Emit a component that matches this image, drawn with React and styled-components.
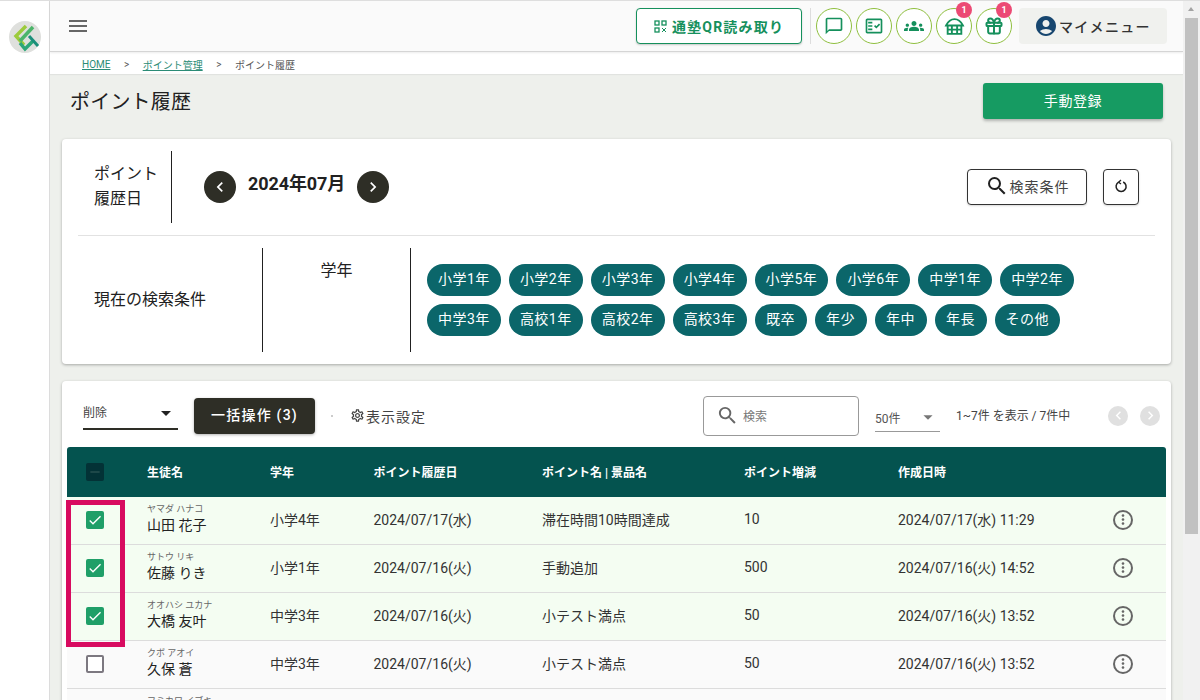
import React from "react";
import styled, { createGlobalStyle } from "styled-components";
import {
  MdMenu,
  MdChatBubbleOutline,
  MdOutlineFactCheck,
  MdGroups,
  MdAccountCircle,
  MdSearch,
  MdChevronLeft,
  MdChevronRight,
  MdArrowDropDown,
  MdOutlineSettings,
  MdCheck,
  MdRemove,
  MdMoreVert,
} from "react-icons/md";
import { LuGift } from "react-icons/lu";

const FONT = `Roboto, "Noto Sans CJK JP", sans-serif`;
const COLS = "80px 123px 103.5px 168.5px 202px 154px 200px 1fr";

const GRADES = [
  ["小学1年", "小学2年", "小学3年", "小学4年", "小学5年", "小学6年", "中学1年", "中学2年"],
  ["中学3年", "高校1年", "高校2年", "高校3年", "既卒", "年少", "年中", "年長", "その他"],
];

const ROWS = [
  { kana: "ヤマダ ハナコ", name: "山田 花子", grade: "小学4年", date: "2024/07/17(水)", item: "滞在時間10時間達成", pt: "10", at: "2024/07/17(水) 11:29", on: true },
  { kana: "サトウ リキ", name: "佐藤 りき", grade: "小学1年", date: "2024/07/16(火)", item: "手動追加", pt: "500", at: "2024/07/16(火) 14:52", on: true },
  { kana: "オオハシ ユカナ", name: "大橋 友叶", grade: "中学3年", date: "2024/07/16(火)", item: "小テスト満点", pt: "50", at: "2024/07/16(火) 13:52", on: true },
  { kana: "クボ アオイ", name: "久保 蒼", grade: "中学3年", date: "2024/07/16(火)", item: "小テスト満点", pt: "50", at: "2024/07/16(火) 13:52", on: false },
  { kana: "フミカワ イブキ", name: "文川 伊吹", grade: "中学3年", date: "2024/07/16(火)", item: "小テスト満点", pt: "50", at: "2024/07/16(火) 13:52", on: false },
];

const Global = createGlobalStyle`
  html, body { margin: 0; height: 100%; overflow: hidden; }
  body { font-family: ${FONT}; color: #212121; background: #fff; }
  * { box-sizing: border-box; }
`;

const Shell = styled.div`
  display: flex;
  height: 700px;
  overflow: hidden;
  border-top: 1px solid #dedede;
`;

const Side = styled.aside`
  flex: 0 0 50px;
  padding: 20px 0 0 9px;
  background: #fff;
  border-right: 1px solid #dcdcdc;
`;

const Main = styled.div`
  flex: 1;
  min-width: 0;
  background: #eef0ec;
`;

const Header = styled.header`
  display: flex;
  align-items: center;
  height: 51px;
  padding: 0 16px 0 16px;
  background: #fafafa;
  border-bottom: 1px solid #d5d5d5;
  box-shadow: 0 1px 2px rgba(0, 0, 0, 0.08);
  position: relative;
  svg { display: block; }
`;

const MenuBtn = styled.div`
  color: #666;
  margin-right: auto;
  font-size: 24px;
`;

const QrBtn = styled.div`
  display: flex;
  align-items: center;
  justify-content: center;
  gap: 5px;
  width: 166px;
  height: 36px;
  color: #15905c;
  background: #fff;
  border: 1px solid #15905c;
  border-radius: 4px;
  font-size: 14px;
  font-weight: 700;
  letter-spacing: 1.2px;
  box-shadow: 0 1px 2px rgba(0, 0, 0, 0.2);
`;

const VLine = styled.div`
  width: 1px;
  height: 36px;
  margin: 0 5px 0 8px;
  background: #ddd;
`;

const Round = styled.div`
  position: relative;
  display: flex;
  align-items: center;
  justify-content: center;
  width: 36px;
  height: 36px;
  margin-right: 4px;
  color: #15905c;
  background: #fff;
  border: 1px solid #8fbf3f;
  border-radius: 50%;
  font-size: 20px;
`;

const Badge = styled.span`
  position: absolute;
  top: -7px;
  right: -1px;
  width: 16px;
  height: 16px;
  line-height: 16px;
  text-align: center;
  color: #fff;
  background: #ec4a74;
  border-radius: 50%;
  font-size: 9px;
  font-weight: 700;
`;

const MyMenu = styled.div`
  display: flex;
  align-items: center;
  gap: 1px;
  width: 148px;
  height: 36px;
  margin-left: 3px;
  padding-left: 15px;
  color: #17466f;
  background: #f0f1ee;
  border-radius: 4px;
  font-size: 14px;
  font-weight: 500;
  letter-spacing: 1.3px;
  span { color: #333; }
  svg { font-size: 24px; }
`;

const Crumbs = styled.nav`
  display: flex;
  align-items: center;
  height: 22px;
  padding: 3px 0 0 32px;
  background: #fff;
  font-size: 10px;
  color: #555;
  box-shadow: 0 1px 1px rgba(0, 0, 0, 0.05);
  i { font-style: normal; margin: 0 13.5px; }
`;

const CrumbLink = styled.a`
  color: #2b8c76;
  text-decoration: underline;
`;

const TitleRow = styled.div`
  display: flex;
  align-items: center;
  justify-content: space-between;
  height: 65px;
  padding: 0 20px 11px;
`;

const Title = styled.h1`
  margin: 2px 0 0;
  font-size: 20px;
  font-weight: 400;
  line-height: 1;
  letter-spacing: 0.2px;
`;

const PrimaryBtn = styled.div`
  width: 180px;
  height: 36px;
  line-height: 36px;
  text-align: center;
  color: #fff;
  background: #169b62;
  border-radius: 3px;
  font-size: 14px;
  letter-spacing: 0.6px;
  box-shadow: 0 2px 3px rgba(0, 0, 0, 0.25);
`;

const Card = styled.section`
  margin: 0 12px 17px;
  background: #fff;
  border-radius: 4px;
  box-shadow: 0 1px 3px rgba(0, 0, 0, 0.3);
`;

const FilterTop = styled.div`
  display: flex;
  align-items: center;
  height: 97px;
  margin: 0 16px;
  padding: 0 16px 1px 16px;
  border-bottom: 1px solid #e2e2e2;
`;

const DateLabel = styled.div`
  width: 78px;
  height: 72px;
  padding-bottom: 2px;
  display: flex;
  align-items: center;
  border-right: 1px solid #212121;
  font-size: 16px;
  line-height: 25px;
`;

const MonthNav = styled.div`
  display: flex;
  align-items: center;
  gap: 12px;
  margin-left: 32px;
  strong {
    font-size: 18px;
    font-weight: 700;
    letter-spacing: -0.1px;
    margin-top: -9px;
  }
`;

const MonthBtn = styled.div`
  display: flex;
  align-items: center;
  justify-content: center;
  width: 32px;
  height: 32px;
  color: #fff;
  background: #2e2e26;
  border-radius: 50%;
  font-size: 20px;
`;

const OutlineBtn = styled.div`
  display: flex;
  align-items: center;
  justify-content: center;
  gap: 1px;
  width: ${(p) => p.$w}px;
  height: 36px;
  padding-bottom: 1px;
  margin-left: ${(p) => p.$ml || 0};
  background: #fff;
  border: 1px solid #333;
  border-radius: 4px;
  font-size: 14px;
  color: #444;
  letter-spacing: 1px;
  box-shadow: 0 1px 2px rgba(0, 0, 0, 0.15);
  svg { color: #212121; font-size: 24px; }
`;

const FilterBottom = styled.div`
  display: flex;
  height: 128px;
  padding: 12px 0;
  margin-left: 16px;
`;

const CondLabel = styled.div`
  width: 185px;
  padding: 0 0 4px 16px;
  display: flex;
  align-items: center;
  border-right: 1px solid #212121;
  font-size: 16px;
`;

const CondName = styled.div`
  width: 148px;
  padding-top: 9px;
  text-align: center;
  border-right: 1px solid #212121;
  font-size: 16px;
`;

const ChipArea = styled.div`
  display: flex;
  flex-direction: column;
  gap: 8px;
  padding: 16px 0 0 16px;
`;

const ChipRow = styled.div`
  display: flex;
  gap: 8px;
`;

const Chip = styled.span`
  min-width: 52px;
  height: 32px;
  line-height: 30px;
  padding: 0 11px;
  text-align: center;
  color: #fff;
  background: #0b666a;
  border-radius: 16px;
  font-size: 14px;
  letter-spacing: 0.5px;
`;

const Toolbar = styled.div`
  display: flex;
  align-items: center;
  height: 66px;
  padding: 3px 0 0 21px;
`;

const BulkSelect = styled.div`
  display: flex;
  align-items: center;
  justify-content: space-between;
  width: 95px;
  height: 30px;
  margin-bottom: 2px;
  border-bottom: 2px solid #2e2e26;
  font-size: 12px;
  color: #444;
  svg { font-size: 24px; color: #222; margin-top: -2px; }
  span { margin-top: -4px; }
`;

const DarkBtn = styled.div`
  width: 121px;
  height: 36px;
  line-height: 34px;
  margin-left: 16px;
  text-align: center;
  color: #fff;
  background: #2e2e26;
  border-radius: 4px;
  font-size: 14px;
  font-weight: 500;
  letter-spacing: 1.2px;
  box-shadow: 0 1px 3px rgba(0, 0, 0, 0.3);
`;

const Dot = styled.i`
  width: 2px;
  height: 2px;
  margin-left: 16px;
  background: #bbb;
  border-radius: 50%;
`;

const Settings = styled.div`
  display: flex;
  align-items: center;
  gap: 1px;
  margin-left: 17px;
  margin-right: auto;
  font-size: 14px;
  color: #444;
  letter-spacing: 1px;
  svg { font-size: 15px; }
`;

const SearchBox = styled.div`
  display: flex;
  align-items: center;
  gap: 4px;
  width: 156px;
  height: 40px;
  padding-left: 12px;
  border: 1px solid #999;
  border-radius: 4px;
  font-size: 12px;
  color: #777;
  svg { font-size: 23px; color: #666; }
`;

const PageSelect = styled.div`
  display: flex;
  align-items: center;
  justify-content: space-between;
  width: 65px;
  height: 30px;
  padding-top: 2px;
  margin: 3px 0 0 16px;
  border-bottom: 1px solid #999;
  font-size: 12px;
  color: #555;
  svg { font-size: 22px; color: #777; margin: -2px 1px 0 0; }
`;

const PageInfo = styled.div`
  width: 152px;
  margin-left: 16px;
  font-size: 12px;
  color: #444;
  margin-top: -2px;
`;

const PageBtn = styled.div`
  display: flex;
  align-items: center;
  justify-content: center;
  width: 20px;
  height: 20px;
  margin-right: ${(p) => p.$mr}px;
  color: #fff;
  background: #e0e0e0;
  border-radius: 50%;
  font-size: 17px;
`;

const TableWrap = styled.div`
  position: relative;
  margin: 0 5px;
`;

const HeadRow = styled.div`
  display: grid;
  grid-template-columns: ${COLS};
  align-items: center;
  height: 50px;
  padding-bottom: 1px;
  color: #fff;
  background: #04534f;
  border-radius: 3px 3px 0 0;
  font-size: 12px;
  font-weight: 700;
`;

const Row = styled.div`
  display: grid;
  grid-template-columns: ${COLS};
  align-items: center;
  height: 48px;
  padding-bottom: 2px;
  background: ${(p) => (p.$on ? "#f4fdf2" : "#fafafa")};
  border-bottom: 1px solid #dcdcdc;
  font-size: 14px;
  color: #333;
`;

const Cell = styled.div`
  padding-bottom: 2px;
`;

const CheckCell = styled.div`
  display: flex;
  justify-content: center;
  padding-right: 24px;
`;

const Check = styled.span`
  display: flex;
  align-items: center;
  justify-content: center;
  width: 18px;
  height: 18px;
  color: ${(p) => (p.$state === "head" ? "#2b5553" : "#fff")};
  background: ${(p) => (p.$state === "on" ? "#1f9f68" : p.$state === "head" ? "#033236" : "#fff")};
  border: ${(p) => (p.$state === "off" ? "2px solid #7c7880" : "none")};
  border-radius: 2px;
  font-size: 16px;
`;

const NameCell = styled.div`
  display: flex;
  flex-direction: column;
`;

const Kana = styled.span`
  font-size: 9px;
  line-height: 11px;
  color: #666;
`;

const Name = styled.span`
  font-size: 14px;
  line-height: 20px;
  color: #222;
`;

const More = styled.div`
  display: flex;
  justify-content: flex-end;
  padding-right: 33px;
`;

const MoreIcon = styled.span`
  display: flex;
  align-items: center;
  justify-content: center;
  width: 20px;
  height: 20px;
  color: #666;
  border: 2px solid #666;
  border-radius: 50%;
  font-size: 17px;
`;

const Highlight = styled.div`
  position: absolute;
  top: 53px;
  left: -1px;
  width: 59px;
  height: 147px;
  border: 5px solid #d80b60;
  pointer-events: none;
`;

const ScrollTrack = styled.div`
  flex: 0 0 17px;
  padding: 17px 2px 0;
  position: relative;
  background: #f1f1f1;
  &::before {
    content: "";
    position: absolute;
    top: 6px;
    left: 5px;
    border: 3.5px solid transparent;
    border-top: 0;
    border-bottom: 4px solid #a3a3a3;
  }
`;

const ScrollThumb = styled.div`
  height: 516px;
  background: #c1c1c1;
`;

const Logo = () => (
  <svg width="32" height="32" viewBox="0 0 32 32">
    <circle cx="16" cy="16" r="16" fill="#dfe0dd" />
    <path d="M17 5 L7 15 L15 24" fill="none" stroke="#9ccb3b" strokeWidth="3.5" />
    <path d="M24 6 L11 20" fill="none" stroke="#4cb56a" strokeWidth="3.5" />
    <path d="M11 22 L16 28 L24 20" fill="none" stroke="#2ba678" strokeWidth="3.5" />
    <path d="M20 15 L29 25" fill="none" stroke="#1b8f7a" strokeWidth="3" />
  </svg>
);

const QrIcon = () => (
  <svg width="13" height="13" viewBox="0 0 13 13" fill="none" stroke="currentColor" strokeWidth="1.3">
    <rect x="1" y="1" width="4" height="4" />
    <rect x="8" y="1" width="4" height="4" />
    <rect x="1" y="8" width="4" height="4" />
    <path d="M8 8l4 4M12 8l-4 4" strokeWidth="1" />
  </svg>
);

const ShopIcon = () => (
  <svg width="21" height="21" viewBox="0 0 20 20" fill="none" stroke="currentColor" strokeWidth="1.8">
    <path d="M2 9 C4 5 7 3 10 3 C13 3 16 5 18 9 Z" />
    <path d="M3.5 9 V17 H16.5 V9" />
    <path d="M7.5 9 V17 M12.5 9 V17 M3.5 13 H16.5" />
  </svg>
);

const ReloadIcon = () => (
  <svg width="14" height="14" viewBox="0 0 14 14" fill="none" stroke="#212121" strokeWidth="1.5">
    <path d="M4.6 3.2 A5 5 0 1 0 9.2 3" />
    <path d="M7 1 L4.6 3.2 L7 5" strokeWidth="1.3" />
  </svg>
);

export default function App() {
  return (
    <>
      <Global />
      <Shell>
        <Side>
          <Logo />
        </Side>
        <Main>
          <Header>
            <MenuBtn>
              <MdMenu />
            </MenuBtn>
            <QrBtn>
              <QrIcon />
              通塾QR読み取り
            </QrBtn>
            <VLine />
            <Round>
              <MdChatBubbleOutline />
            </Round>
            <Round>
              <MdOutlineFactCheck />
            </Round>
            <Round>
              <MdGroups />
            </Round>
            <Round>
              <ShopIcon />
              <Badge>1</Badge>
            </Round>
            <Round>
              <LuGift strokeWidth={2.4} />
              <Badge>1</Badge>
            </Round>
            <MyMenu>
              <MdAccountCircle />
              <span>マイメニュー</span>
            </MyMenu>
          </Header>
          <Crumbs>
            <CrumbLink>HOME</CrumbLink>
            <i>&gt;</i>
            <CrumbLink>ポイント管理</CrumbLink>
            <i>&gt;</i>
            ポイント履歴
          </Crumbs>
          <TitleRow>
            <Title>ポイント履歴</Title>
            <PrimaryBtn>手動登録</PrimaryBtn>
          </TitleRow>

          <Card>
            <FilterTop>
              <DateLabel>
                <div>
                  ポイント
                  <br />
                  履歴日
                </div>
              </DateLabel>
              <MonthNav>
                <MonthBtn>
                  <MdChevronLeft />
                </MonthBtn>
                <strong>2024年07月</strong>
                <MonthBtn>
                  <MdChevronRight />
                </MonthBtn>
              </MonthNav>
              <OutlineBtn $w={120} $ml="auto">
                <MdSearch />
                検索条件
              </OutlineBtn>
              <OutlineBtn $w={36} $ml="16px">
                <ReloadIcon />
              </OutlineBtn>
            </FilterTop>
            <FilterBottom>
              <CondLabel>現在の検索条件</CondLabel>
              <CondName>学年</CondName>
              <ChipArea>
                {GRADES.map((line, i) => (
                  <ChipRow key={i}>
                    {line.map((g) => (
                      <Chip key={g}>{g}</Chip>
                    ))}
                  </ChipRow>
                ))}
              </ChipArea>
            </FilterBottom>
          </Card>

          <Card>
            <Toolbar>
              <BulkSelect>
                <span>削除</span>
                <MdArrowDropDown />
              </BulkSelect>
              <DarkBtn>一括操作 (3)</DarkBtn>
              <Dot />
              <Settings>
                <MdOutlineSettings />
                表示設定
              </Settings>
              <SearchBox>
                <MdSearch />
                検索
              </SearchBox>
              <PageSelect>
                50件
                <MdArrowDropDown />
              </PageSelect>
              <PageInfo>1~7件 を表示 / 7件中</PageInfo>
              <PageBtn $mr={12}>
                <MdChevronLeft />
              </PageBtn>
              <PageBtn $mr={11}>
                <MdChevronRight />
              </PageBtn>
            </Toolbar>
            <TableWrap>
              <HeadRow>
                <CheckCell>
                  <Check $state="head">
                    <MdRemove />
                  </Check>
                </CheckCell>
                <div>生徒名</div>
                <div>学年</div>
                <div>ポイント履歴日</div>
                <div>ポイント名 | 景品名</div>
                <div>ポイント増減</div>
                <div>作成日時</div>
              </HeadRow>
              {ROWS.map((r) => (
                <Row key={r.kana} $on={r.on}>
                  <CheckCell>
                    <Check $state={r.on ? "on" : "off"}>{r.on && <MdCheck />}</Check>
                  </CheckCell>
                  <NameCell>
                    <Kana>{r.kana}</Kana>
                    <Name>{r.name}</Name>
                  </NameCell>
                  <Cell>{r.grade}</Cell>
                  <Cell>{r.date}</Cell>
                  <Cell>{r.item}</Cell>
                  <Cell>{r.pt}</Cell>
                  <Cell>{r.at}</Cell>
                  <More>
                    <MoreIcon>
                      <MdMoreVert />
                    </MoreIcon>
                  </More>
                </Row>
              ))}
              <Highlight />
            </TableWrap>
          </Card>
        </Main>
        <ScrollTrack>
          <ScrollThumb />
        </ScrollTrack>
      </Shell>
    </>
  );
}
